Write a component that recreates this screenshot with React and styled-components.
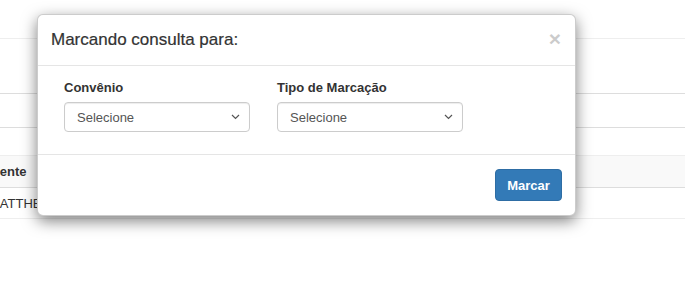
import React from "react";
import styled, { createGlobalStyle } from "styled-components";

const GlobalStyle = createGlobalStyle`
  html, body {
    margin: 0;
    padding: 0;
    background: #ffffff;
    overflow: hidden;
  }
  body {
    font-family: "Liberation Sans", Arial, Helvetica, sans-serif;
    font-size: 13px;
    color: #333333;
  }
`;

const Page = styled.div`
  position: relative;
  width: 685px;
  height: 295px;
  overflow: hidden;
`;

const Band = styled.div`
  height: ${(p) => p.h}px;
  border-bottom: 1px solid ${(p) => p.line || "#eeeeee"};
`;

const Table = styled.table`
  border-collapse: collapse;
  margin-left: -35px;
  width: 720px;
`;

const Th = styled.th`
  text-align: left;
  font-weight: bold;
  height: 31px;
  padding: 0 8px;
  background: #f9f9f9;
  border-bottom: 1px solid #dddddd;
`;

const Td = styled.td`
  height: 30px;
  padding: 0 8px 0 ${(p) => p.indent || 8}px;
  border-bottom: 1px solid #eeeeee;
`;

const Modal = styled.div`
  position: absolute;
  left: 37px;
  top: 14px;
  width: 537px;
  background: #ffffff;
  border: 1px solid rgba(0, 0, 0, 0.2);
  border-radius: 6px;
  box-shadow: 0 5px 15px rgba(0, 0, 0, 0.5);
`;

const Header = styled.div`
  display: flex;
  align-items: center;
  justify-content: space-between;
  height: 50px;
  padding: 0 14px 0 13px;
  border-bottom: 1px solid #e5e5e5;
`;

const Title = styled.h4`
  margin: 0;
  font-size: 17px;
  font-weight: normal;
  color: #333333;
  -webkit-text-stroke: 0.2px #333333;
`;

const Close = styled.button`
  border: 0;
  background: none;
  padding: 0;
  margin-top: -3px;
  font-family: "Liberation Sans", Arial, sans-serif;
  font-size: 21px;
  font-weight: bold;
  line-height: 1;
  color: #000000;
  opacity: 0.2;
`;

const Body = styled.div`
  display: flex;
  gap: 27px;
  height: 89px;
  padding: 0 26px;
  box-sizing: border-box;
  border-bottom: 1px solid #e5e5e5;
`;

const Field = styled.div`
  display: flex;
  flex-direction: column;
  width: 186px;
  padding-top: 14px;
`;

const Label = styled.label`
  font-weight: bold;
  font-size: 13px;
  line-height: 16px;
  margin-bottom: 6px;
`;

const Select = styled.div`
  display: flex;
  align-items: center;
  justify-content: space-between;
  height: 30px;
  box-sizing: border-box;
  padding: 0 9px 0 12px;
  border: 1px solid #cccccc;
  border-radius: 4px;
  color: #555555;
  font-size: 13px;
  box-shadow: inset 0 1px 1px rgba(0, 0, 0, 0.075);
`;

const Footer = styled.div`
  display: flex;
  justify-content: flex-end;
  padding: 14px 13px 14px;
`;

const Button = styled.button`
  width: 67px;
  height: 32px;
  border: 1px solid #2e6da4;
  border-radius: 4px;
  background: #337ab7;
  color: #ffffff;
  font-family: "Liberation Sans", Arial, sans-serif;
  font-size: 13px;
  font-weight: bold;
`;

function Chevron() {
  return (
    <svg width="9" height="6" viewBox="0 0 9 6">
      <path d="M1 1l3.5 3.5L8 1" fill="none" stroke="#555" strokeWidth="1.2" />
    </svg>
  );
}

export default function App() {
  return (
    <Page>
      <GlobalStyle />
      <Band h={38} />
      <Band h={54} line="#dddddd" />
      <Band h={33} line="#dddddd" />
      <Band h={27} line="#eeeeee" />
      <Table>
        <thead>
          <tr>
            <Th>Paciente</Th>
          </tr>
        </thead>
        <tbody>
          <tr>
            <Td indent={24}>MATTHEUS</Td>
          </tr>
        </tbody>
      </Table>

      <Modal>
        <Header>
          <Title>Marcando consulta para:</Title>
          <Close>×</Close>
        </Header>
        <Body>
          <Field>
            <Label>Convênio</Label>
            <Select>
              Selecione
              <Chevron />
            </Select>
          </Field>
          <Field>
            <Label>Tipo de Marcação</Label>
            <Select>
              Selecione
              <Chevron />
            </Select>
          </Field>
        </Body>
        <Footer>
          <Button>Marcar</Button>
        </Footer>
      </Modal>
    </Page>
  );
}
